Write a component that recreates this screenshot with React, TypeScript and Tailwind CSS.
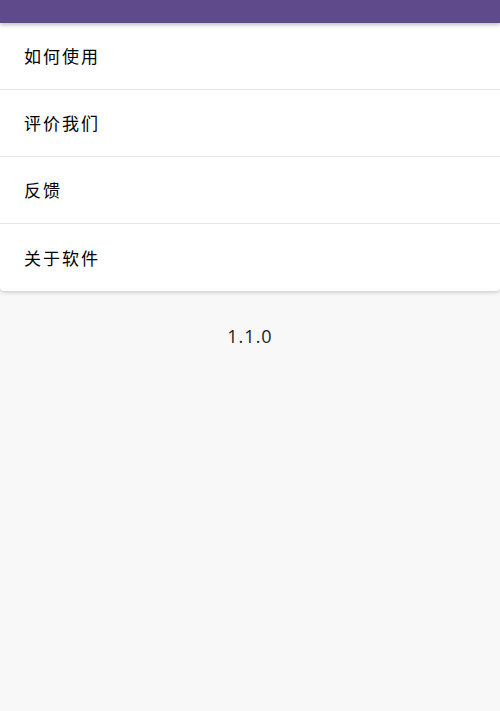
export default function App() {
  const items = ["如何使用", "评价我们", "反馈", "关于软件"];
  return (
    <div
      className="min-h-[711px] w-[500px] bg-[#f8f8f8]"
      style={{ fontFamily: '"Noto Sans CJK SC", "Noto Sans", sans-serif' }}
    >
      {/* Top bar */}
      <div className="h-[23px] bg-[#5f4b8b] shadow-[0_2px_4px_rgba(0,0,0,0.25)] relative z-10" />

      {/* Menu card */}
      <div className="bg-white rounded-b-[4px] shadow-[0_1px_4px_rgba(0,0,0,0.22)]">
        {items.map((label, i) => (
          <div
            key={label}
            className={`h-[67px] flex items-center pl-[24px] ${
              i < items.length - 1 ? "border-b border-[#e6e6e6]" : ""
            }`}
          >
            <span className="text-[17px] text-[#000] tracking-[2px]">{label}</span>
          </div>
        ))}
      </div>

      {/* Version */}
      <div
        className="text-center pt-[32px] text-[18px] text-[#222] tracking-[1px]"
        style={{ fontFamily: '"Open Sans", sans-serif' }}
      >
        1.1.0
      </div>
    </div>
  );
}
